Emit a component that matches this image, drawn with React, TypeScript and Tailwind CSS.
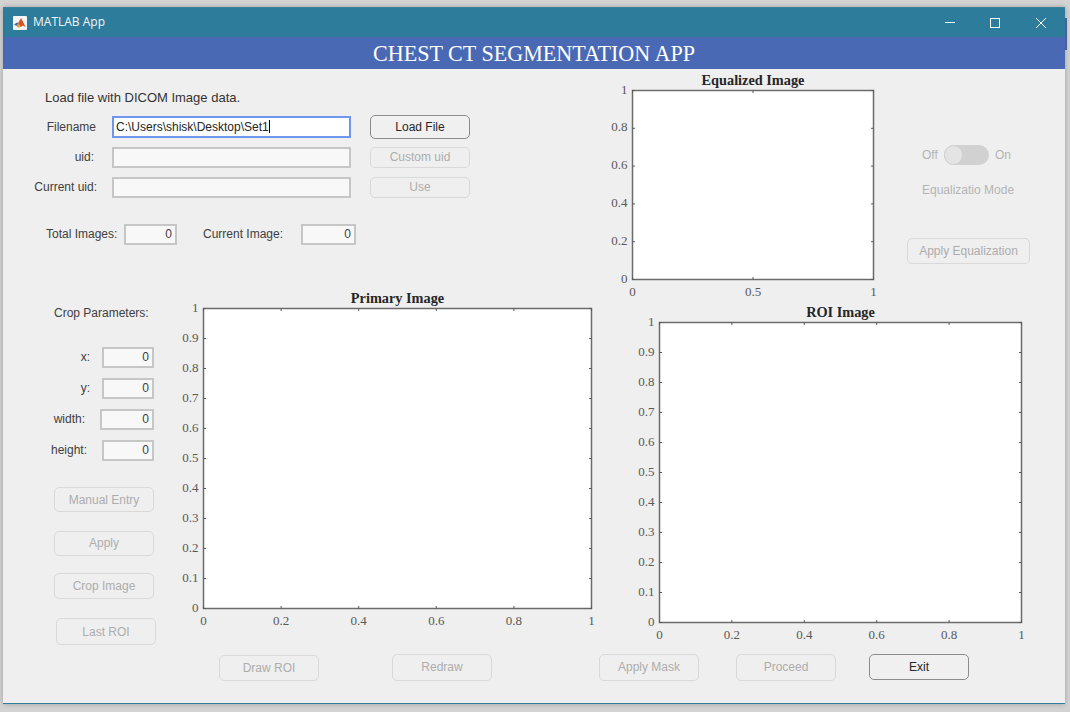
import React from "react";

const sans = "font-['Liberation_Sans',Arial,sans-serif]";

type PlotProps = {
  title: string;
  width: number;
  height: number;
  xTicks: string[];
  yTicks: string[];
};

const LEFT = 40;
const TOP = 20;
const BOTTOM = 24;

// matlab style axes box with ticks pointing in on all sides
const Plot: React.FC<PlotProps> = ({ title, width, height, xTicks, yTicks }) => {
  const svgW = width + LEFT + 12;
  const svgH = height + TOP + BOTTOM;
  const x0 = LEFT + 0.5;
  const y0 = TOP + 0.5;
  return (
    <svg width={svgW} height={svgH} className="block shrink-0">
      <rect x={x0} y={y0} width={width} height={height} fill="#ffffff" stroke="#6b6b6b" strokeWidth="1.5" />
      <text
        x={x0 + width / 2}
        y={TOP - 5}
        textAnchor="middle"
        fontFamily="Liberation Serif, serif"
        fontWeight="700"
        fontSize="14.3"
        fill="#262626"
      >
        {title}
      </text>
      {xTicks.map((t, i) => {
        const x = x0 + (width * i) / (xTicks.length - 1);
        return (
          <g key={t}>
            <path d={`M${x} ${y0}v2.5M${x} ${y0 + height}v-2.5`} stroke="#5a5a5a" />
            <text x={x} y={y0 + height + 16} textAnchor="middle" fontFamily="Liberation Serif, serif" fontSize="13" fill="#595959">
              {t}
            </text>
          </g>
        );
      })}
      {yTicks.map((t, i) => {
        const y = y0 + height - (height * i) / (yTicks.length - 1);
        return (
          <g key={t}>
            <path d={`M${x0} ${y}h2.5M${x0 + width} ${y}h-2.5`} stroke="#5a5a5a" />
            <text x={x0 - 5} y={y + 3} textAnchor="end" fontFamily="Liberation Serif, serif" fontSize="13" fill="#595959">
              {t}
            </text>
          </g>
        );
      })}
    </svg>
  );
};

const Btn: React.FC<{ label: string; active?: boolean; className?: string }> = ({ label, active, className = "" }) => (
  <div
    className={`flex items-center justify-center rounded-[5px] text-[12px] ${
      active
        ? "border-[1.5px] border-[#8c8c8c] text-[#262626] bg-[#f0f0f0]"
        : "border-[1.5px] border-[#d9d9d9] text-[#adadad]"
    } ${className}`}
  >
    {label}
  </div>
);

const Field: React.FC<{ value?: string; className?: string }> = ({ value = "0", className = "" }) => (
  <div className={`flex items-center justify-end pr-[3px] pb-px bg-[#f8f8f8] border-2 border-[#c6c6c6] text-[12px] text-[#404040] ${className}`}>
    {value}
  </div>
);

const CropRow: React.FC<{ label: string; labelW: number; inputW: string; className?: string }> = ({ label, labelW, inputW, className = "" }) => (
  <div className={`flex items-center justify-end h-[21px] ${className}`}>
    <span className="pb-px text-[12px] text-[#404040] text-right" style={{ marginRight: labelW }}>
      {label}
    </span>
    <Field className={`h-[21px] ${inputW}`} />
  </div>
);

const MatlabIcon = () => (
  <svg width="14" height="14" viewBox="0 0 14 14" className="shrink-0">
    <rect width="14" height="14" rx="1" fill="#f4f4f4" />
    <path d="M1 8.5 4 6.5 5.5 7.5 3.5 10Z" fill="#3b6ea5" />
    <path d="M5 7.2 8 2l2 4.5L12.6 11 10 9.5 7.5 11 6 8.5Z" fill="#d9541e" />
    <path d="M8 2l2 4.5L12.6 11 9.5 6.5Z" fill="#8c2a10" />
    <path d="M3.5 10 5.5 7.5 7 10.5 6 12Z" fill="#e89a2c" />
  </svg>
);

export default function App() {
  return (
    <div className={`relative w-[1070px] h-[712px] overflow-hidden bg-[#d3d3d3] pt-[7px] pl-[3px] ${sans}`}>
      <div className="relative w-[1062px] h-[697px] flex flex-col bg-[#efefef] border-b border-[#2e7d9b] shadow-[0_0_5px_rgba(0,0,0,0.25)]">
        {/* title bar */}
        <div className="h-[30px] shrink-0 flex items-center bg-[#2e7c9b] border-t border-[#3a8298] pl-[10px] text-white">
          <MatlabIcon />
          <span className="ml-[6px] pb-[2px] text-[12px] font-['Open_Sans',sans-serif] text-[#f2f6f8]">MATLAB App</span>
          <div className="ml-auto flex items-center h-full">
            <div className="w-[10px] h-px bg-white mr-[35px]" />
            <div className="w-[10px] h-[10px] border border-white mr-[36px]" />
            <svg width="10" height="10" viewBox="0 0 10 10" className="mr-[19px]">
              <path d="M0 0 10 10M10 0 0 10" stroke="#ffffff" strokeWidth="1" fill="none" />
            </svg>
          </div>
        </div>

        {/* app header */}
        <div className="h-[32px] shrink-0 flex items-center justify-center pt-[2px] bg-[#4a69b5] font-['Liberation_Serif',serif] text-[22.1px] text-white">
          CHEST CT SEGMENTATION APP
        </div>

        <div className="flex flex-1 min-h-0">
          {/* left column */}
          <div className="w-[593px] shrink-0 flex flex-col">
            <div className="ml-[42px] mt-[19px] h-[20px] leading-[20px] text-[13px] text-[#333333]">
              Load file with DICOM Image data.
            </div>

            <div className="mt-[7px] flex items-center h-[24px]">
              <span className="pb-px w-[93px] text-right text-[12px] text-[#404040]">Filename</span>
              <div className="ml-[16px] w-[239px] h-[22px] flex items-center pl-[2px] pb-px bg-white border-2 border-[#6f97ee] text-[12px] text-[#262626]">
                C:\Users\shisk\Desktop\Set1
                <span className="w-px h-[13px] bg-black" />
              </div>
              <Btn active label="Load File" className="ml-[19px] w-[100px] h-[24px] pb-px" />
            </div>

            <div className="mt-[8px] flex items-center h-[21px]">
              <span className="pb-px w-[91px] text-right text-[12px] text-[#404040]">uid:</span>
              <Field value="" className="ml-[18px] w-[239px] h-[21px]" />
              <Btn label="Custom uid" className="ml-[19px] w-[100px] h-[21px] pb-px" />
            </div>

            <div className="mt-[9px] flex items-center h-[21px]">
              <span className="pb-px w-[94px] text-right text-[12px] text-[#404040]">Current uid:</span>
              <Field value="" className="ml-[15px] w-[239px] h-[21px]" />
              <Btn label="Use" className="ml-[19px] w-[100px] h-[21px] pb-px" />
            </div>

            <div className="mt-[26px] flex items-center h-[21px] pl-[43px] whitespace-nowrap">
              <span className="pb-px w-[71px] text-[12px] text-[#404040]">Total Images:</span>
              <Field className="ml-[7px] w-[53px] h-[21px]" />
              <span className="pb-px ml-[26px] w-[80px] text-[12px] text-[#404040]">Current Image:</span>
              <Field className="ml-[18px] w-[55px] h-[21px]" />
            </div>

            <div className="mt-[43px] flex">
              <div className="w-[160px] shrink-0 flex flex-col">
                <div className="mt-[17px] ml-[51px] h-[16px] leading-[16px] text-[12px] text-[#404040]">Crop Parameters:</div>
                <div className="mt-[26px] mr-[9px] flex flex-col">
                  <CropRow label="x:" labelW={12} inputW="w-[52px]" />
                  <CropRow label="y:" labelW={12} inputW="w-[52px]" className="mt-[10px]" />
                  <CropRow label="width:" labelW={15} inputW="w-[54px]" className="mt-[10px]" />
                  <CropRow label="height:" labelW={15} inputW="w-[52px]" className="mt-[10px]" />
                </div>
                <Btn label="Manual Entry" className="mt-[26px] ml-[51px] w-[100px] h-[25px]" />
                <Btn label="Apply" className="mt-[19px] ml-[51px] w-[100px] h-[25px] pb-px" />
                <Btn label="Crop Image" className="mt-[17px] ml-[51px] w-[100px] h-[26px]" />
                <Btn label="Last ROI" className="mt-[19px] ml-[53px] w-[100px] h-[27px]" />
              </div>
              <div>
                <Plot
                  title="Primary Image"
                  width={388}
                  height={300}
                  xTicks={["0", "0.2", "0.4", "0.6", "0.8", "1"]}
                  yTicks={["0", "0.1", "0.2", "0.3", "0.4", "0.5", "0.6", "0.7", "0.8", "0.9", "1"]}
                />
                <div className="mt-[23px] flex">
                  <Btn label="Draw ROI" className="ml-[56px] w-[100px] h-[26px] pb-px" />
                  <Btn label="Redraw" className="ml-[73px] mt-[-1px] w-[100px] h-[27px] pb-px" />
                </div>
              </div>
            </div>
          </div>

          {/* right column */}
          <div className="flex-1 flex flex-col">
            <div className="flex mt-px">
              <div className="ml-[-4px]">
                <Plot
                  title="Equalized Image"
                  width={241}
                  height={189}
                  xTicks={["0", "0.5", "1"]}
                  yTicks={["0", "0.2", "0.4", "0.6", "0.8", "1"]}
                />
              </div>
              <div className="ml-[22px] flex flex-col text-[12px] text-[#b4b4b4]">
                <div className="mt-[74px] ml-[15px] flex items-center h-[21px]">
                  <span className="w-[22px]">Off</span>
                  <div className="w-[45px] h-[20px] rounded-full bg-[#d1d1d1] flex items-center">
                    <div className="w-[19px] h-[20px] rounded-full bg-[#e4e4e4] border border-[#d1d1d1]" />
                  </div>
                  <span className="ml-[6px]">On</span>
                </div>
                <div className="ml-[15px] mt-[18px] h-[14px] leading-[14px]">Equalizatio Mode</div>
                <Btn label="Apply Equalization" className="mt-[41px] w-[123px] h-[26px]" />
              </div>
            </div>
            <div className="ml-[23px] mt-[-1px]">
              <Plot
                title="ROI Image"
                width={362}
                height={300}
                xTicks={["0", "0.2", "0.4", "0.6", "0.8", "1"]}
                yTicks={["0", "0.1", "0.2", "0.3", "0.4", "0.5", "0.6", "0.7", "0.8", "0.9", "1"]}
              />
            </div>
            <div className="mt-[8px] ml-[3px] flex">
              <Btn label="Apply Mask" className="w-[100px] h-[27px] pb-px" />
              <Btn label="Proceed" className="ml-[37px] w-[100px] h-[27px] pb-px" />
              <Btn active label="Exit" className="ml-[33px] w-[100px] h-[26px] pb-px" />
            </div>
          </div>
        </div>
      </div>
      {/* sliver of the window behind */}
      <div className="absolute left-[1065px] top-[18px] w-[2px] h-[32px] bg-[#4a5f9e]" />
    </div>
  );
}
